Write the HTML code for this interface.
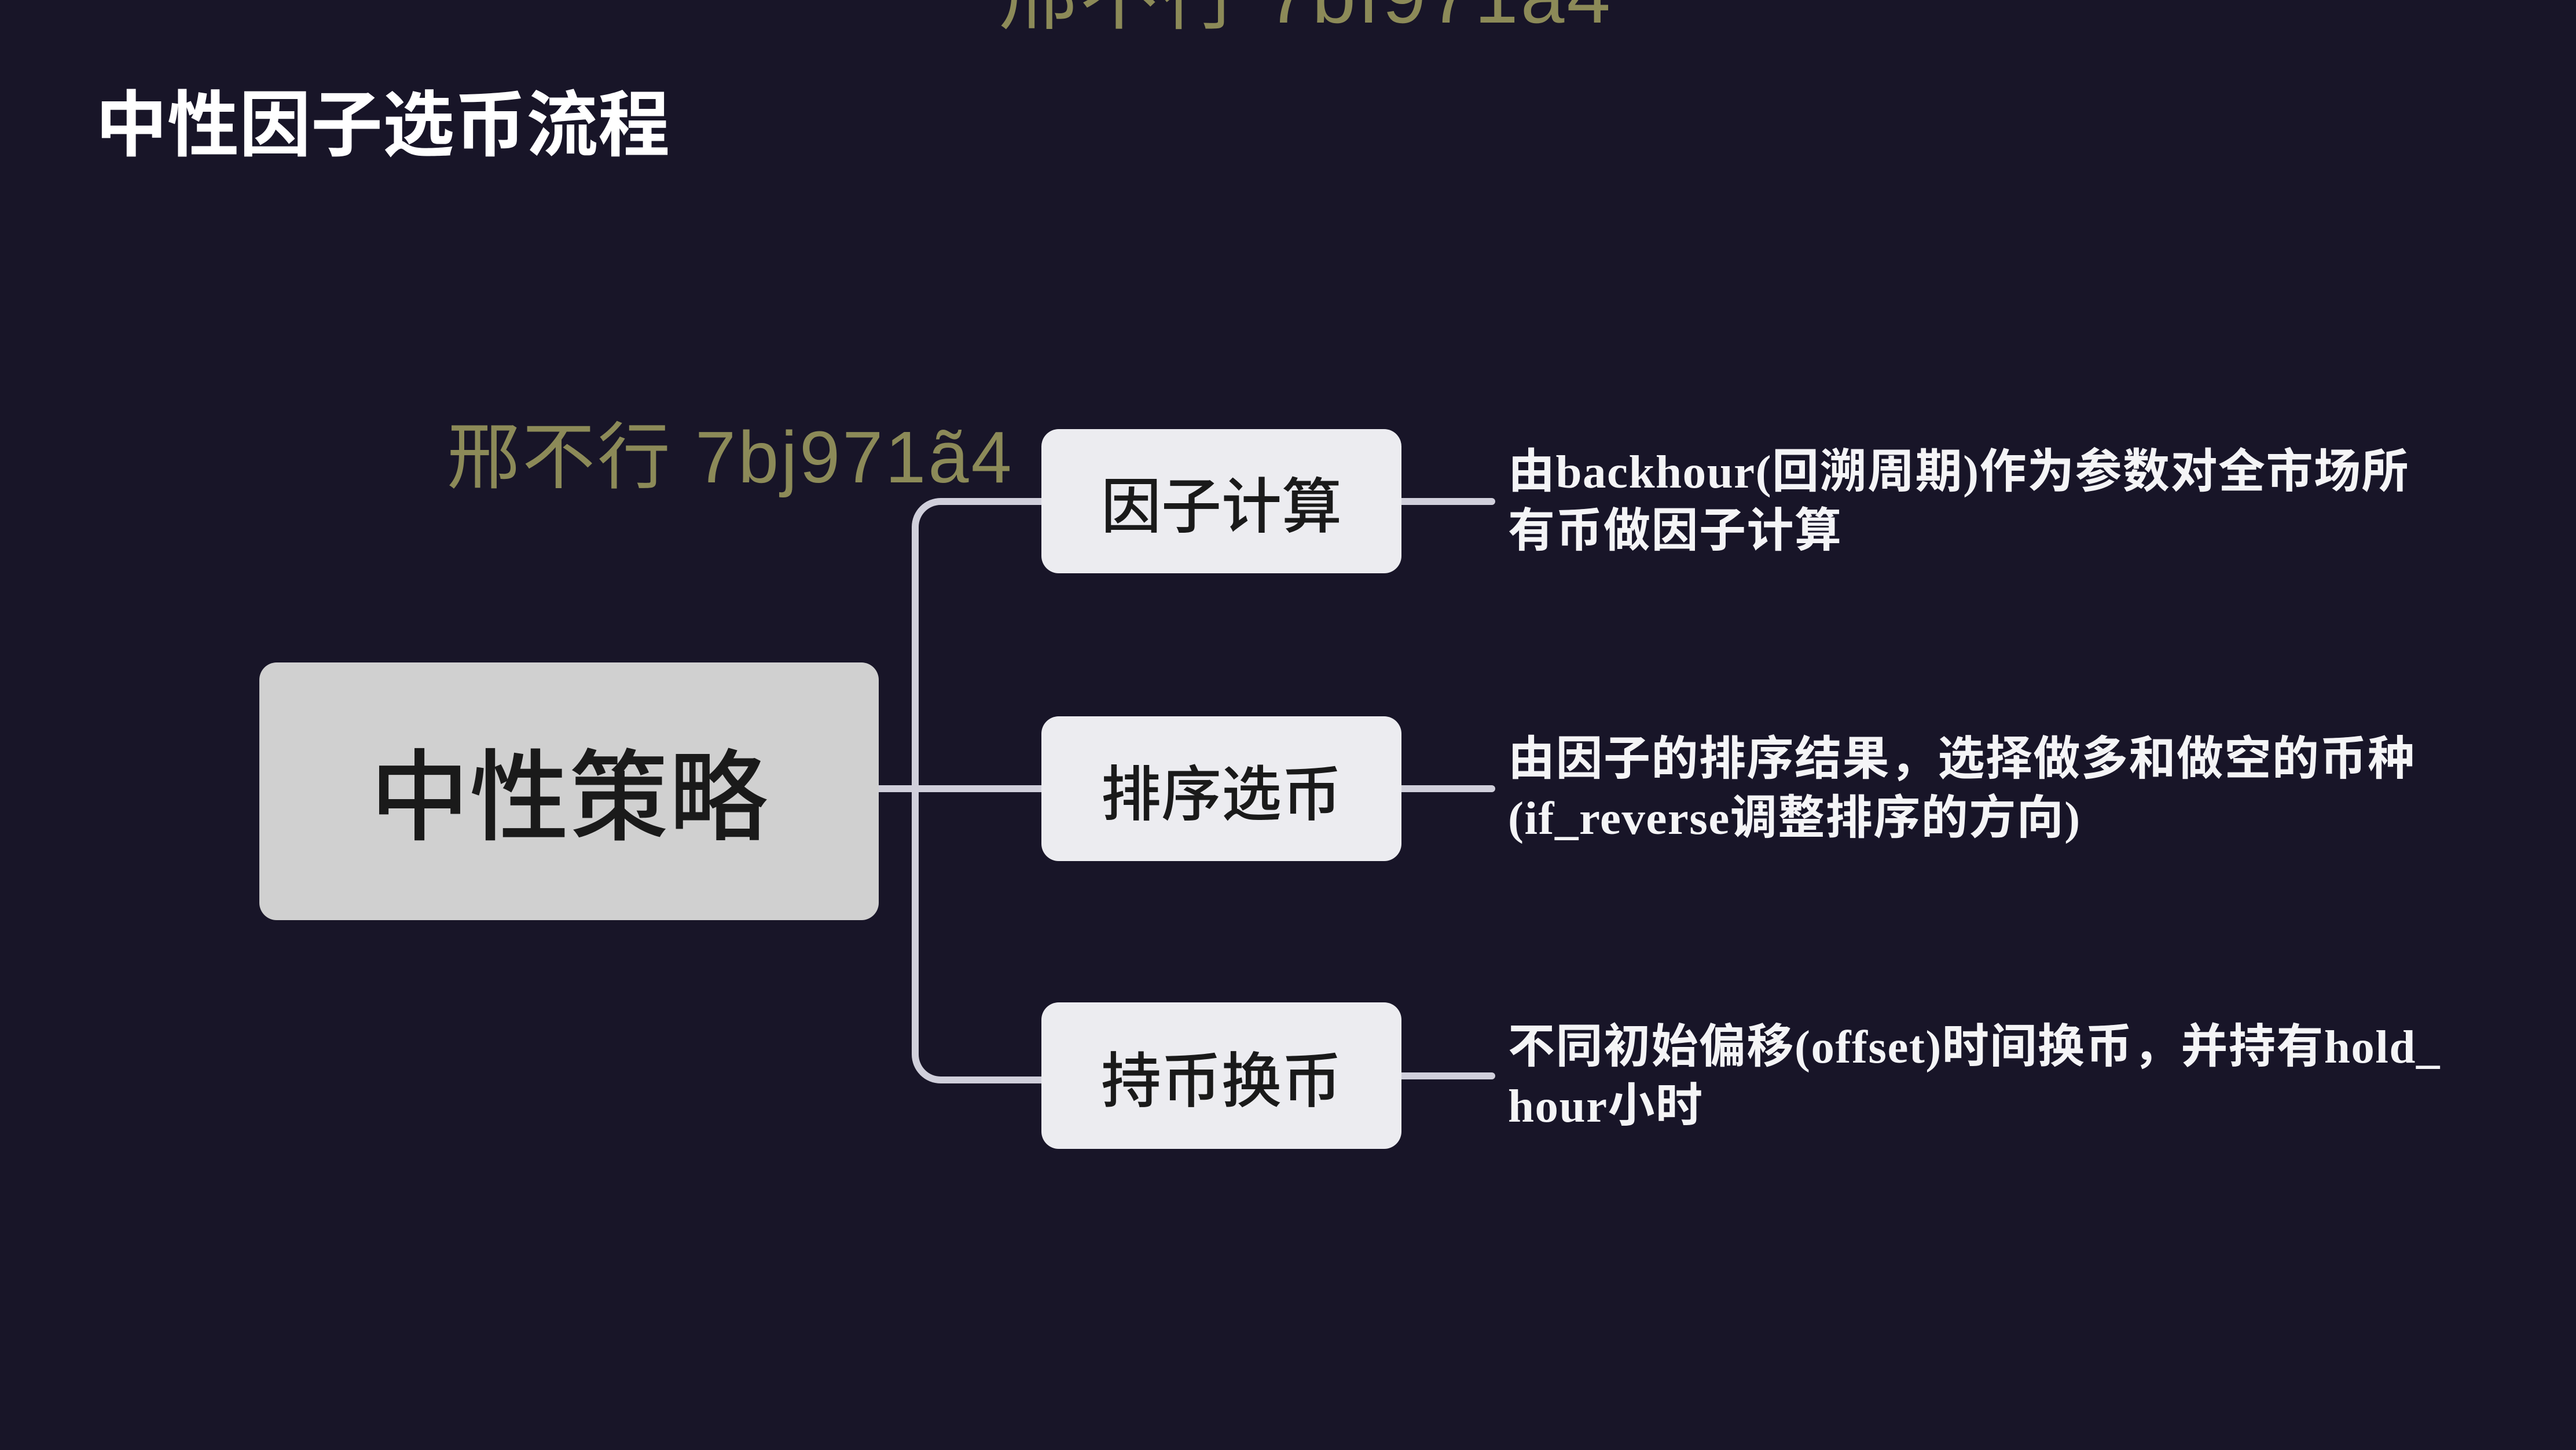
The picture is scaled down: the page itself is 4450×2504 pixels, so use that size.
<!DOCTYPE html>
<html><head><meta charset="utf-8"><style>
html,body{margin:0;padding:0}
body{width:4450px;height:2504px;background:#181528;position:relative;overflow:hidden;font-family:"Liberation Sans","Noto Sans CJK SC",sans-serif}
.abs{position:absolute;white-space:nowrap}
.wm{color:#8c8a58;font-family:"Liberation Sans","Noto Sans CJK SC",sans-serif;letter-spacing:4px}
.box{position:absolute;background:#ececf0;border-radius:30px;display:flex;align-items:center;justify-content:center;color:#1a1a1a;font-family:"Noto Sans CJK SC",sans-serif;font-weight:500}
.ln{position:absolute;background:#d0cfdb;height:12px}
.desc{position:absolute;color:#f4f4f6;font-size:81px;line-height:102px;font-weight:bold;letter-spacing:1.5px;font-family:"Liberation Serif","Noto Sans CJK SC",serif;white-space:nowrap}
</style></head><body>
<div class="abs wm" style="left:1725px;top:-88px;font-size:136px;line-height:160px">邢不行 7bf971a4</div>
<div class="abs" style="left:165px;top:130px;font-size:124px;line-height:150px;color:#fff;font-weight:bold;font-family:'Noto Sans CJK SC',sans-serif">中性因子选币流程</div>
<div class="abs wm" style="left:772px;top:715px;font-size:126px;line-height:150px">邢不行 7bj971ã4</div>

<div class="box" style="left:448px;top:1144px;width:1070px;height:445px;background:#d0d0d0;font-size:172px;padding-bottom:10px;box-sizing:border-box">中性策略</div>

<div style="position:absolute;left:1575px;top:860px;width:230px;height:987px;border:12px solid #d0cfdb;border-right:none;border-radius:50px 0 0 50px"></div>
<div class="ln" style="left:1518px;top:1356px;width:290px"></div>

<div class="box" style="left:1799px;top:741px;width:622px;height:249px;font-size:104px">因子计算</div>
<div class="box" style="left:1799px;top:1237px;width:622px;height:250px;font-size:104px">排序选币</div>
<div class="box" style="left:1799px;top:1731px;width:622px;height:253px;font-size:104px">持币换币</div>

<div class="ln" style="left:2421px;top:860px;width:162px;border-radius:0 6px 6px 0"></div>
<div class="ln" style="left:2421px;top:1356px;width:162px;border-radius:0 6px 6px 0"></div>
<div class="ln" style="left:2421px;top:1852px;width:162px;border-radius:0 6px 6px 0"></div>

<div class="desc" style="left:2605px;top:764px">由backhour(回溯周期)作为参数对全市场所<br>有币做因子计算</div>
<div class="desc" style="left:2605px;top:1260px">由因子的排序结果，选择做多和做空的币种<br>(if_reverse调整排序的方向)</div>
<div class="desc" style="left:2605px;top:1757px">不同初始偏移(offset)时间换币，并持有hold_<br>hour小时</div>
</body></html>
